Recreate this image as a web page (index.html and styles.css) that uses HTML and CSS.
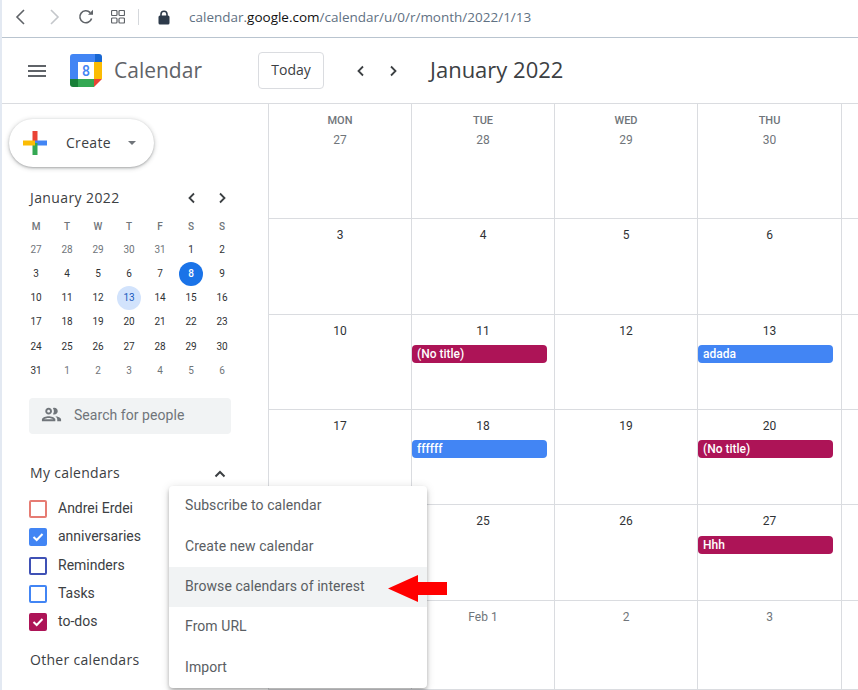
FILE: index.html
```html
<!DOCTYPE html>
<html lang="en">
<head>
<meta charset="utf-8">
<title>Google Calendar - January 2022</title>
<link rel="stylesheet" href="styles.css">
</head>
<body>
<div class="window">
  <div class="browser-bar">
    <svg class="b-icon back" width="16" height="18" viewBox="0 0 16 18"><path d="M11 2 L4 9 L11 16" /></svg>
    <svg class="b-icon forward" width="16" height="18" viewBox="0 0 16 18"><path d="M5 2 L12 9 L5 16" /></svg>
    <svg class="b-icon reload" width="16" height="16" viewBox="0 0 16 16"><path d="M13.6 9.5 A6 6 0 1 1 12.2 3.6" /><path class="solid" d="M10 5.8 L15 5.8 L15 0.8 Z" /></svg>
    <svg class="b-icon apps" width="14" height="14" viewBox="0 0 14 14"><rect x="0.5" y="0.5" width="5.5" height="5" rx="1"/><rect x="8" y="0.5" width="5.5" height="5" rx="1"/><rect x="0.5" y="8" width="5.5" height="5" rx="1"/><rect x="8" y="8" width="5.5" height="5" rx="1"/></svg>
    <span class="b-sep"></span>
    <svg class="lock" width="12" height="15" viewBox="0 0 12 15"><path d="M3 6.5 V4.2 A3 3 0 0 1 9 4.2 V6.5" fill="none" stroke="#2d3a4a" stroke-width="1.6"/><rect x="0.5" y="5.5" width="11" height="9" rx="1.5" fill="#2d3a4a"/></svg>
    <div class="url"><span class="url-dim">calendar.</span><span class="url-host">google.com</span><span class="url-dim">/calendar/u/0/r/month/2022/1/13</span></div>
  </div>

  <header class="app-header">
    <div class="hamburger"><span></span><span></span><span></span></div>
    <svg class="logo" width="32" height="33" viewBox="0 0 32 33">
      <path d="M3 0 H25 V8 H8 V25 H0 V3 A3 3 0 0 1 3 0 Z" fill="#4285f4"/>
      <path d="M25 0 H29 A3 3 0 0 1 32 3 V8 H25 Z" fill="#1967d2"/>
      <rect x="24" y="8" width="8" height="17" fill="#fbbc04"/>
      <rect x="8" y="25" width="16" height="8" fill="#34a853"/>
      <path d="M0 25 H8 V33 H3 A3 3 0 0 1 0 30 Z" fill="#188038"/>
      <path d="M24 25 H32 L24 33 Z" fill="#ea4335"/>
      <text x="16" y="21.5" text-anchor="middle" class="logo-num">8</text>
    </svg>
    <div class="app-name">Calendar</div>
    <button class="today">Today</button>
    <div class="h-nav">
      <svg class="chev" width="12" height="12" viewBox="0 0 12 12"><path d="M8 1.5 L3.5 6 L8 10.5"/></svg>
      <svg class="chev" width="12" height="12" viewBox="0 0 12 12"><path d="M4 1.5 L8.5 6 L4 10.5"/></svg>
    </div>
    <div class="month-title">January 2022</div>
  </header>

  <div class="body-row">
    <aside class="sidebar">
      <button class="create">
        <svg class="plus" width="26" height="26" viewBox="0 0 26 26">
          <rect x="10.5" y="1" width="5" height="12" fill="#ea4335"/>
          <rect x="13" y="10.5" width="12" height="5" fill="#4285f4"/>
          <rect x="10.5" y="13" width="5" height="12" fill="#34a853"/>
          <rect x="1" y="10.5" width="12" height="5" fill="#fbbc04"/>
        </svg>
        <span class="create-label">Create</span>
        <span class="caret"></span>
      </button>

      <div class="mini-head">
        <span class="mini-title">January 2022</span>
        <div class="mini-nav">
          <svg class="chev" width="12" height="12" viewBox="0 0 12 12"><path d="M8 1.5 L3.5 6 L8 10.5"/></svg>
          <svg class="chev" width="12" height="12" viewBox="0 0 12 12"><path d="M4 1.5 L8.5 6 L4 10.5"/></svg>
        </div>
      </div>
      <div class="mini-grid">
        <span class="mh">M</span><span class="mh">T</span><span class="mh">W</span><span class="mh">T</span><span class="mh">F</span><span class="mh">S</span><span class="mh">S</span>
        <span class="md off">27</span><span class="md off">28</span><span class="md off">29</span><span class="md off">30</span><span class="md off">31</span><span class="md">1</span><span class="md">2</span>
        <span class="md">3</span><span class="md">4</span><span class="md">5</span><span class="md">6</span><span class="md">7</span><span class="md today-dot">8</span><span class="md">9</span>
        <span class="md">10</span><span class="md">11</span><span class="md">12</span><span class="md selected">13</span><span class="md">14</span><span class="md">15</span><span class="md">16</span>
        <span class="md">17</span><span class="md">18</span><span class="md">19</span><span class="md">20</span><span class="md">21</span><span class="md">22</span><span class="md">23</span>
        <span class="md">24</span><span class="md">25</span><span class="md">26</span><span class="md">27</span><span class="md">28</span><span class="md">29</span><span class="md">30</span>
        <span class="md">31</span><span class="md off">1</span><span class="md off">2</span><span class="md off">3</span><span class="md off">4</span><span class="md off">5</span><span class="md off">6</span>
      </div>

      <div class="people">
        <svg class="people-icon" width="23" height="23" viewBox="0 0 24 24"><path d="M9 13.75c-2.34 0-7 1.17-7 3.5V19h14v-1.75c0-2.33-4.66-3.5-7-3.5zM4.34 17c.84-.58 2.87-1.25 4.66-1.25s3.82.67 4.66 1.25H4.34zM9 12c1.93 0 3.5-1.57 3.5-3.5S10.930 5 9 5 5.500 6.570 5.500 8.500 7.070 12 9 12zm0-5c.83 0 1.500.67 1.500 1.500S9.830 10 9 10s-1.500-.67-1.500-1.500S8.170 7 9 7zm7.040 6.810c1.160.84 1.960 1.960 1.960 3.440V19h4v-1.750c0-2.020-3.500-3.170-5.960-3.440zM15 12c1.930 0 3.500-1.570 3.500-3.500S16.930 5 15 5c-.54 0-1.040.13-1.500.35.630.89 1 1.980 1 3.150s-.37 2.260-1 3.150c.46.220.96.350 1.500.350z"/></svg>
        <span class="people-text">Search for people</span>
      </div>

      <div class="section-head">
        <span>My calendars</span>
        <svg class="chev strong" width="12" height="12" viewBox="0 0 12 12"><path d="M1.500 8.500 L6 4 L10.500 8.500"/></svg>
      </div>
      <ul class="cal-list">
        <li class="cal-row"><span class="box box-coral"></span>Andrei Erdei</li>
        <li class="cal-row"><span class="box box-blue checked"><svg width="14" height="14" viewBox="0 0 14 14"><path d="M2.500 7 L5.700 10 L11.500 4"/></svg></span>anniversaries</li>
        <li class="cal-row"><span class="box box-indigo"></span>Reminders</li>
        <li class="cal-row"><span class="box box-blue"></span>Tasks</li>
        <li class="cal-row"><span class="box box-berry checked"><svg width="14" height="14" viewBox="0 0 14 14"><path d="M2.500 7 L5.700 10 L11.500 4"/></svg></span>to-dos</li>
      </ul>
      <div class="section-head other">Other calendars</div>
    </aside>

    <main class="month">
      <div class="cell"><span class="dow">MON</span><span class="date off">27</span></div>
      <div class="cell"><span class="dow">TUE</span><span class="date off">28</span></div>
      <div class="cell"><span class="dow">WED</span><span class="date off">29</span></div>
      <div class="cell"><span class="dow">THU</span><span class="date off">30</span></div>
      <div class="cell"></div>

      <div class="cell"><span class="date">3</span></div>
      <div class="cell"><span class="date">4</span></div>
      <div class="cell"><span class="date">5</span></div>
      <div class="cell"><span class="date">6</span></div>
      <div class="cell"></div>

      <div class="cell"><span class="date">10</span></div>
      <div class="cell"><span class="date">11</span><div class="event berry">(No title)</div></div>
      <div class="cell"><span class="date">12</span></div>
      <div class="cell"><span class="date">13</span><div class="event blue">adada</div></div>
      <div class="cell"></div>

      <div class="cell"><span class="date">17</span></div>
      <div class="cell"><span class="date">18</span><div class="event blue">ffffff</div></div>
      <div class="cell"><span class="date">19</span></div>
      <div class="cell"><span class="date">20</span><div class="event berry">(No title)</div></div>
      <div class="cell"></div>

      <div class="cell"><span class="date">24</span></div>
      <div class="cell"><span class="date">25</span></div>
      <div class="cell"><span class="date">26</span></div>
      <div class="cell"><span class="date">27</span><div class="event berry low">Hhh</div></div>
      <div class="cell"></div>

      <div class="cell"><span class="date">31</span></div>
      <div class="cell"><span class="date off">Feb 1</span></div>
      <div class="cell"><span class="date off">2</span></div>
      <div class="cell"><span class="date off">3</span></div>
      <div class="cell"></div>
    </main>
  </div>

  <div class="popup-menu">
    <div class="menu-item">Subscribe to calendar</div>
    <div class="menu-item">Create new calendar</div>
    <div class="menu-item hover">Browse calendars of interest</div>
    <div class="menu-item">From URL</div>
    <div class="menu-item">Import</div>
  </div>
  <svg class="annotation" width="60" height="28" viewBox="0 0 60 28"><polygon points="0,13.500 30,0 30,7 59,7 59,20 30,20 30,27" fill="#ff0000"/></svg>
</div>
</body>
</html>
```

FILE: styles.css
```css
* { box-sizing: border-box; }
html, body { margin: 0; padding: 0; height: 100%; overflow: hidden; background: #fff; }
body { font-family: Roboto, "Liberation Sans", sans-serif; color: #3c4043; }

.window {
  position: relative;
  width: 858px;
  height: 690px;
  border-left: 2px solid #e3e9f2;
  overflow: hidden;
  display: flex;
  flex-direction: column;
}

/* Browser chrome */
.browser-bar {
  height: 38px;
  flex: none;
  display: flex;
  align-items: center;
  border-bottom: 1px solid #b9c4cf;
  padding-bottom: 3px;
}
.b-icon { fill: none; stroke: #5f6368; stroke-width: 1.600; flex: none; }
.b-icon .solid { fill: #5f6368; stroke: none; }
.back { margin-left: 11px; }
.forward { margin-left: 17px; stroke: #c4c7cb; }
.reload { margin-left: 16px; }
.apps { margin-left: 17px; stroke-width: 1.200; }
.b-sep { width: 1px; height: 16px; background: #d5d8dc; margin-left: 13px; flex: none; }
.lock { margin-left: 19px; flex: none; }
.url { margin-left: 19px; font-family: "Open Sans", sans-serif; font-size: 13.500px; white-space: nowrap; }
.url-dim { color: #5f7183; }
.url-host { color: #111; }

/* App header */
.app-header {
  height: 66px;
  flex: none;
  display: flex;
  align-items: center;
  border-bottom: 1px solid #dadce0;
}
.hamburger { margin-left: 26px; width: 18px; display: flex; flex-direction: column; gap: 3px; flex: none; }
.hamburger span { height: 2px; background: #5f6368; display: block; }
.logo { margin-left: 24px; flex: none; }
.logo-num { font-family: Roboto, sans-serif; font-size: 14px; font-weight: 500; fill: #4285f4; }
.app-name { margin: 0 0 2px 12px; width: 144px; font-family: "Open Sans", sans-serif; font-size: 21px; color: #5f6368; flex: none; }
.today {
  width: 66px;
  height: 37px;
  border: 1px solid #dadce0;
  border-radius: 4px;
  background: #fff;
  font-family: "Open Sans", sans-serif;
  font-size: 14px;
  font-weight: 500;
  color: #3c4043;
  padding: 0 0 2px;
  flex: none;
}
.chev { fill: none; stroke: #3c4043; stroke-width: 1.800; flex: none; }
.chev.strong { stroke-width: 2; }
.h-nav { margin-left: 31px; display: flex; gap: 20px; flex: none; }
.month-title { margin: 0 0 3px 31px; font-family: "Open Sans", sans-serif; font-size: 22px; color: #3c4043; white-space: nowrap; }

/* Layout */
.body-row { flex: 1; display: flex; min-height: 0; }
.sidebar { width: 266px; flex: none; overflow: hidden; display: flex; flex-direction: column; }

.create {
  margin: 15px 0 0 7px;
  width: 145px;
  height: 48px;
  border: none;
  border-radius: 24px;
  background: #fff;
  box-shadow: 0 1px 2px rgba(60,64,67,.3), 0 1px 4px 1px rgba(60,64,67,.2);
  display: flex;
  align-items: center;
  padding: 0 0 0 13px;
  flex: none;
}
.plus { flex: none; }
.create-label { margin: 0 0 2px 18px; font-family: "Open Sans", sans-serif; font-size: 14px; letter-spacing: .3px; font-weight: 500; color: #3c4043; }
.caret { margin-left: 17px; width: 0; height: 0; border-left: 4px solid transparent; border-right: 4px solid transparent; border-top: 4px solid #70757a; }

.mini-head {
  margin: 21px 0 0 28px;
  width: 198px;
  height: 20px;
  display: flex;
  align-items: center;
  justify-content: space-between;
  flex: none;
}
.mini-title { margin-bottom: 2px; font-family: "Open Sans", sans-serif; font-size: 14px; letter-spacing: .4px; color: #3c4043; }
.mini-nav { display: flex; gap: 18px; }

.mini-grid {
  margin: 6px 0 0 18.500px;
  display: grid;
  grid-template-columns: repeat(7, 31px);
  grid-auto-rows: 24.100px;
  justify-items: center;
  align-items: center;
  flex: none;
}
.mh { font-size: 10px; font-weight: 500; color: #70757a; }
.md { font-size: 10px; font-weight: 400; color: #2f3235; width: 24px; height: 24px; line-height: 24px; text-align: center; border-radius: 50%; }
.md.off { color: #70757a; }
.md.today-dot { background: #1a73e8; color: #fff; font-weight: 500; }
.md.selected { background: #d2e3fc; color: #185abc; }

.people {
  margin: 15.300px 0 0 27px;
  width: 202px;
  height: 36px;
  border-radius: 4px;
  background: #f1f3f4;
  display: flex;
  align-items: center;
  padding: 0 0 2px 11px;
  flex: none;
}
.people-icon { fill: #70757a; flex: none; }
.people-text { margin-left: 11px; font-size: 14px; letter-spacing: .05px; color: #70757a; }

.section-head {
  margin: 30px 0 0 28px;
  width: 196px;
  height: 20px;
  display: flex;
  align-items: center;
  justify-content: space-between;
  font-family: "Open Sans", sans-serif;
  font-size: 14px;
  letter-spacing: .3px;
  font-weight: 500;
  color: #3c4043;
  flex: none;
}
.section-head span { margin-bottom: 2px; }
.section-head.other { margin-top: 13px; }

.cal-list { list-style: none; margin: 11px 0 0 27px; padding: 0; flex: none; }
.cal-row { height: 28.250px; padding-bottom: 2px; display: flex; align-items: center; gap: 11px; font-size: 14px; color: #3c4043; }
.box { width: 18px; height: 18px; margin-top: 2px; border: 2px solid; border-radius: 2px; display: flex; align-items: center; justify-content: center; flex: none; }
.box svg { fill: none; stroke: #fff; stroke-width: 2; }
.box-coral { border-color: #e67c73; }
.box-blue { border-color: #4285f4; }
.box-indigo { border-color: #3f51b5; }
.box-berry { border-color: #ad1457; }
.box-blue.checked { background: #4285f4; }
.box-berry.checked { background: #ad1457; }

/* Month grid */
.month {
  flex: 1;
  display: grid;
  grid-template-columns: 144px 143px 143px 144px 1fr;
  grid-template-rows: 115px 96px 95px 95px 96px 1fr;
  min-width: 0;
}
.cell {
  border-right: 1px solid #dadce0;
  border-bottom: 1px solid #dadce0;
  display: flex;
  flex-direction: column;
  align-items: center;
  padding-top: 6px;
  min-width: 0;
  position: relative;
}
.cell:nth-child(5n+1) { border-left: 1px solid #dadce0; }
.cell:nth-child(5n) { border-right: none; }
.dow { font-size: 11px; font-weight: 500; line-height: 20px; margin: 1px 0 -1px; color: #70757a; }
.date { font-size: 12px; font-weight: 400; line-height: 20px; color: #2f3235; }
.date.off { color: #70757a; }
.event {
  align-self: flex-start;
  margin-top: 4px;
  width: 135px;
  height: 18px;
  line-height: 18px;
  padding-left: 5px;
  border-radius: 4px;
  color: #fff;
  font-size: 12px;
  font-weight: 500;
}
.event.low { margin-top: 5px; }
.event.berry { background: #ad1457; }
.event.blue { background: #4285f4; }

/* Overlay menu */
.popup-menu {
  position: absolute;
  left: 167px;
  top: 486px;
  width: 258px;
  height: 202px;
  display: grid;
  grid-template-rows: repeat(5, 1fr);
  background: #fff;
  border-radius: 4px;
  box-shadow: 0 4px 5px 0 rgba(0,0,0,.14), 0 1px 10px 0 rgba(0,0,0,.12), 0 2px 4px -1px rgba(0,0,0,.2);
}
.menu-item { display: flex; align-items: center; padding: 0 0 2px 16px; font-size: 14px; letter-spacing: .07px; color: #5a5e63; }
.menu-item.hover { background: #f1f3f4; }
.annotation { position: absolute; left: 386px; top: 575px; }
```
